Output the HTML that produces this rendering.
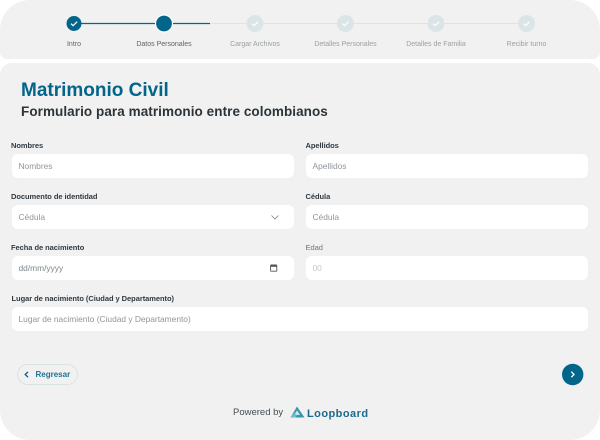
<!DOCTYPE html>
<html lang="es"><head><meta charset="utf-8"><title>Matrimonio Civil</title>
<style>
html,body{margin:0;padding:0}
body{width:600px;height:440px;background:#fff;position:relative;overflow:hidden;font-family:"Liberation Sans",sans-serif}
.a{position:absolute;white-space:nowrap}
.panel{position:absolute;background:#f1f1f1;left:0;width:600px}
.step{position:absolute;top:41px;width:120px;text-align:center;font-size:7px;line-height:8px;color:#9aa0a4}
.lb{position:absolute;font-size:7.5px;line-height:10px;font-weight:bold;color:#2f3a42;white-space:nowrap;letter-spacing:-.05px}
.in{position:absolute;background:#fff;border-radius:6px;height:24px;line-height:24px;width:282px;font-size:8.4px;color:#8f969b;box-sizing:border-box;padding-left:6.5px}
svg{position:absolute;overflow:visible}
</style></head><body>
<div class="panel" style="top:0;height:59px;border-radius:30px 30px 7px 7px"></div>
<div class="panel" style="top:63px;height:377px;border-radius:12px 12px 30px 30px"></div>

<svg style="left:0;top:0" width="600" height="60">
<line x1="74" y1="23.5" x2="210" y2="23.5" stroke="#02658a" stroke-width="1.2"/>
<line x1="210" y1="23.5" x2="526" y2="23.5" stroke="#dbe5e8" stroke-width="1"/>
<circle cx="74" cy="23.5" r="7.5" fill="#02658a"/>
<path d="M71 23.7l2.100 2 4-4" fill="none" stroke="#fff" stroke-width="1.2"/>
<circle cx="164" cy="23.5" r="8.5" fill="#02658a" stroke="#fff" stroke-width="1.2"/>
<g fill="#dbe5e8"><circle cx="255" cy="23.5" r="8.5"/><circle cx="345.500" cy="23.5" r="8.5"/><circle cx="436" cy="23.5" r="8.500"/><circle cx="526.500" cy="23.5" r="8.5"/></g>
<g fill="none" stroke="#fff" stroke-width="1.1"><path d="M252 23.700l2.100 2 4-4"/><path d="M342.500 23.700l2.100 2 4-4"/><path d="M433 23.700l2.100 2 4-4"/><path d="M523.500 23.700l2.100 2 4-4"/></g>
</svg>
<div class="step" style="left:14px;color:#5b656c">Intro</div>
<div class="step" style="left:104px;color:#5b656c">Datos Personales</div>
<div class="step" style="left:195px">Cargar Archivos</div>
<div class="step" style="left:285.500px">Detalles Personales</div>
<div class="step" style="left:376px">Detalles de Familia</div>
<div class="step" style="left:466.500px">Recibir turno</div>

<div class="a" style="left:21px;top:80px;font-size:19px;line-height:22px;font-weight:bold;color:#02658a">Matrimonio Civil</div>
<div class="a" style="left:21px;top:103px;font-size:13.5px;line-height:17px;font-weight:bold;color:#2c3439;letter-spacing:.07px">Formulario para matrimonio entre colombianos</div>

<div class="lb" style="left:11px;top:140.500px">Nombres</div>
<div class="in" style="left:12px;top:154px">Nombres</div>
<div class="lb" style="left:305.500px;top:140.500px">Apellidos</div>
<div class="in" style="left:306px;top:154px">Apellidos</div>

<div class="lb" style="left:11px;top:192px">Documento de identidad</div>
<div class="in" style="left:12px;top:205px">Cédula</div>
<svg style="left:271px;top:215px" width="8" height="5"><path d="M.5.500L4 4 7.500.500" fill="none" stroke="#7d868b" stroke-width=".8"/></svg>
<div class="lb" style="left:305.500px;top:192px">Cédula</div>
<div class="in" style="left:306px;top:205px">Cédula</div>

<div class="lb" style="left:11px;top:242.500px">Fecha de nacimiento</div>
<div class="in" style="left:12px;top:256px;color:#7f878c">dd/mm/yyyy</div>
<svg style="left:270px;top:264px" width="8" height="8"><rect x=".6" y="1" width="6.200" height="6.200" rx=".6" fill="none" stroke="#4d565c" stroke-width=".9"/><rect x=".6" y="1" width="6.200" height="1.800" fill="#4d565c"/></svg>
<div class="lb" style="left:305.500px;top:242.500px;font-weight:normal;color:#6e767b">Edad</div>
<div class="in" style="left:306px;top:256px;color:#c2c6c9">00</div>

<div class="lb" style="left:11.500px;top:294px">Lugar de nacimiento (Ciudad y Departamento)</div>
<div class="in" style="left:12px;top:307px;width:576px">Lugar de nacimiento (Ciudad y Departamento)</div>

<div class="a" style="left:16.500px;top:364px;width:61.500px;height:21px;box-sizing:border-box;border:1px solid #d9e2e5;border-radius:11px"></div>
<svg style="left:24px;top:371px" width="6" height="8"><path d="M4 .8L1.200 3.500 4 6.200" fill="none" stroke="#02658a" stroke-width="1.300"/></svg>
<div class="a" style="left:35.500px;top:369px;font-size:8px;line-height:11px;font-weight:bold;color:#1d7491">Regresar</div>

<svg style="left:562px;top:364px" width="22" height="22"><circle cx="10.700" cy="10.500" r="10.700" fill="#02658a"/><path d="M9.300 7.700L12 10.500 9.300 13.200" fill="none" stroke="#fff" stroke-width="1.300"/></svg>

<div class="a" style="left:233px;top:406.500px;font-size:9.500px;line-height:12px;color:#444d53">Powered by</div>
<svg style="left:290px;top:406px" width="15" height="12"><path d="M7 .5L14.500 11.500H.5z" fill="#3c94ad"/><path d="M7 4.500L10 9H4z" fill="#d5e6eb"/><path d="M.5 11.500L4 7l3 2-1.500 2.500z" fill="#60c0cc"/></svg>
<div class="a" style="left:307px;top:407px;font-size:11px;line-height:14px;font-weight:bold;color:#1b6b8c;letter-spacing:.45px">Loopboard</div>
</body></html>
